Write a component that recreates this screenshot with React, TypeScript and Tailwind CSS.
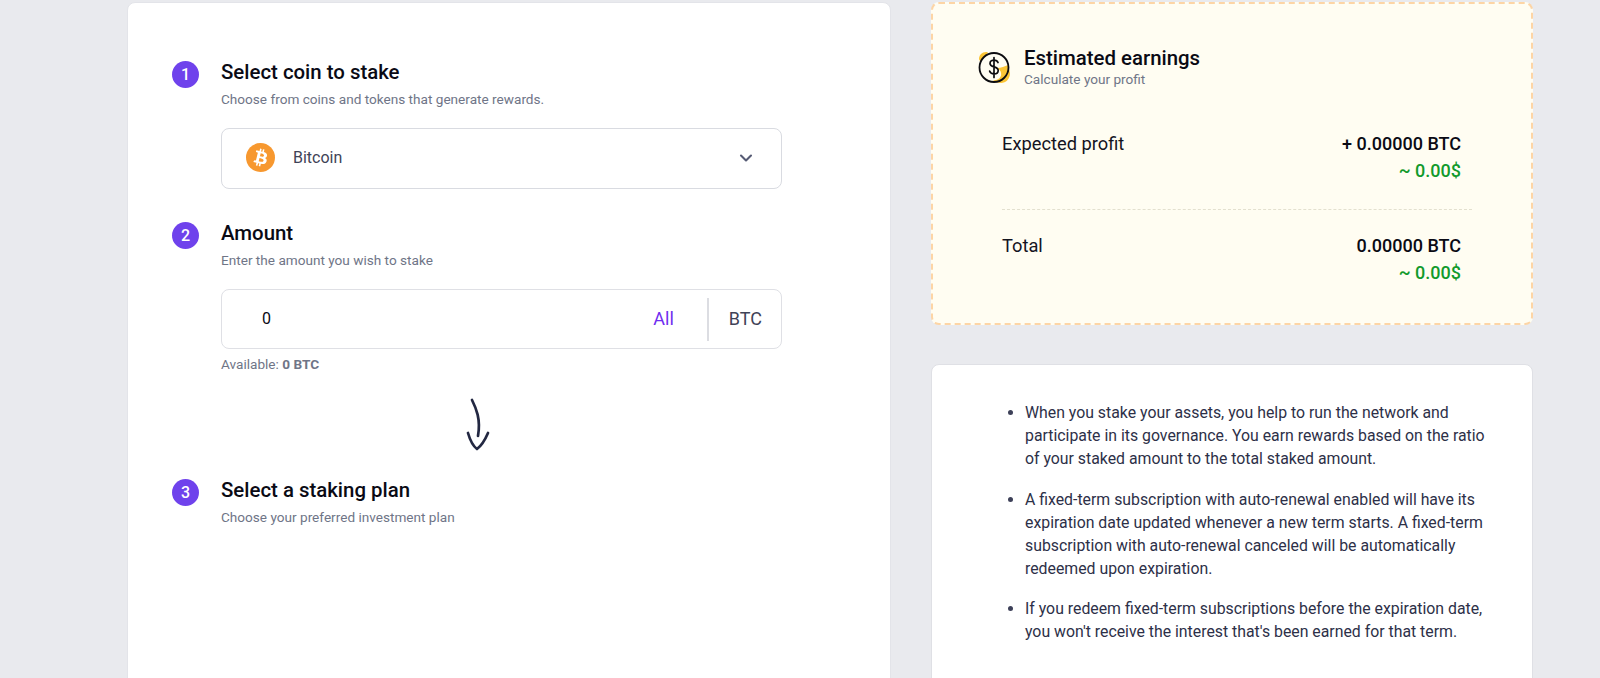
import { ChevronDown } from "lucide-react";

const font = { fontFamily: "Roboto, sans-serif" };

const notes = [
  "When you stake your assets, you help to run the network and participate in its governance. You earn rewards based on the ratio of your staked amount to the total staked amount.",
  "A fixed-term subscription with auto-renewal enabled will have its expiration date updated whenever a new term starts. A fixed-term subscription with auto-renewal canceled will be automatically redeemed upon expiration.",
  "If you redeem fixed-term subscriptions before the expiration date, you won't receive the interest that's been earned for that term.",
];

function StepHeader({ n, title, sub }: { n: number; title: string; sub: string }) {
  return (
    <div className="flex items-start">
      <div className="mt-[1px] flex h-[27px] w-[27px] shrink-0 items-center justify-center rounded-full bg-[#6f42ec] text-[16px] font-medium text-white">
        {n}
      </div>
      <div className="ml-[22px]">
        <h2 className="text-[20.4px] leading-[24px] font-medium text-[#0a0a14]">{title}</h2>
        <p className="mt-[6px] text-[13.6px] leading-[18px] text-[#6f7587]">{sub}</p>
      </div>
    </div>
  );
}

function BitcoinIcon() {
  return (
    <svg width="29" height="29" viewBox="0 0 32 32">
      <circle cx="16" cy="16" r="16" fill="#f7982f" />
      <path
        fill="#fff"
        d="M23.2 14c.3-2.1-1.3-3.2-3.5-4l.7-2.8-1.7-.4-.7 2.8-1.4-.3.7-2.8-1.7-.4-.7 2.8-1.1-.3-2.4-.6-.5 1.8s1.3.3 1.3.3c.7.2.8.6.8 1l-.8 3.2-1.1 4.5c-.1.2-.3.5-.8.4 0 0-1.3-.3-1.3-.3l-.9 2 2.3.6 1.2.3-.7 2.9 1.7.4.7-2.8 1.4.4-.7 2.8 1.7.4.7-2.9c3 .6 5.2.3 6.1-2.3.8-2.1 0-3.3-1.6-4.1 1.1-.3 2-1 2.2-2.6zm-3.9 5.5c-.5 2.1-4.1 1-5.3.7l.9-3.7c1.2.3 4.9.9 4.4 3zm.5-5.5c-.5 1.9-3.5.9-4.4.7l.8-3.4c1 .3 4.100.7 3.600 2.700z"
      />
    </svg>
  );
}

function DollarIcon() {
  return (
    <svg width="33" height="33" viewBox="0 0 33 33" fill="none">
      <path d="M1 8c0-4 3-7 7-7 1 0 2 .5 2 1L3 10c-1 0-2-1-2-2z" fill="#fbc536" />
      <path d="M19 17c4 0 8-2 11-3l2 8c0 6-4 10-9 10-3 0-6-1-8-3 5 1 9-3 8-7 0-2-2-4-4-5z" fill="#fbc536" />
      <circle cx="16" cy="16.500" r="14.500" stroke="#0c0c10" strokeWidth="1.800" />
      <path
        d="M20 11.500c-.6-1.700-2.100-2.400-4-2.400-2.200 0-4 1.100-4 3.300 0 4.400 8.200 2.500 8.200 7 0 2.200-1.900 3.400-4.200 3.400-2.100 0-3.800-.9-4.400-2.800M16 6.500v20"
        stroke="#0c0c10"
        strokeWidth="1.700"
        strokeLinecap="round"
      />
    </svg>
  );
}

function ArrowDoodle() {
  return (
    <svg width="24" height="54" viewBox="0 0 24 54" fill="none">
      <path
        d="M6 2C10 10 15 21 12 38M2 35C4 42 7 48 11 51C15 48 19 42 22 35"
        stroke="#232842"
        strokeWidth="2.700"
        strokeLinecap="round"
        strokeLinejoin="round"
      />
    </svg>
  );
}

function EarningRow({ label, value }: { label: string; value: string }) {
  return (
    <div className="flex items-start justify-between pr-[11px]">
      <span className="text-[18.3px] leading-[27px] text-[#14141f]">{label}</span>
      <div className="text-right">
        <div className="text-[18px] leading-[27px] font-medium text-[#0a0a14]">{value}</div>
        <div className="text-[18px] leading-[27px] font-medium text-[#129a2c]">~ 0.00$</div>
      </div>
    </div>
  );
}

export default function App() {
  return (
    <div style={font} className="h-[678px] overflow-hidden bg-[#e9eaee]">
      <div className="ml-[127px] flex w-[1406px] items-start gap-[40px]">
        {/* Left card */}
        <div className="mt-[2px] h-[800px] w-[764px] shrink-0 rounded-lg border border-[#e3e4e9] bg-white pt-[57px] pl-[44px]">
          <div className="w-[610px]">
            <StepHeader n={1} title="Select coin to stake" sub="Choose from coins and tokens that generate rewards." />
            <div className="mt-[20px] ml-[49px] flex h-[61px] items-center rounded-lg border border-[#d9dbe1] pr-[25px] pb-[2px] pl-[24px]">
              <BitcoinIcon />
              <span className="ml-[18px] text-[16px] text-[#3f4357]">Bitcoin</span>
              <ChevronDown className="ml-auto h-[20px] w-[20px] text-[#565b74]" strokeWidth={2.5} />
            </div>

            <div className="mt-[32px]">
              <StepHeader n={2} title="Amount" sub="Enter the amount you wish to stake" />
            </div>
            <div className="mt-[20px] ml-[49px] flex h-[60px] items-center rounded-lg border border-[#dfe0e5]">
              <span className="ml-[40px] text-[16px] text-[#0a0a14]">0</span>
              <span className="ml-auto pb-[2px] text-[18px] text-[#6f2df0]">All</span>
              <div className="mr-[20px] ml-[33px] h-[43px] w-[2px] bg-[#dcdde2]" />
              <span className="mr-[19px] pb-[2px] text-[18px] text-[#3f4357]">BTC</span>
            </div>
            <p className="mt-[6px] ml-[49px] text-[13.6px] leading-[18px] text-[#6f7587]">
              Available: <span className="font-bold">0 BTC</span>
            </p>

            <div className="mt-[25px] ml-[294px]">
              <ArrowDoodle />
            </div>

            <div className="mt-[26px]">
              <StepHeader n={3} title="Select a staking plan" sub="Choose your preferred investment plan" />
            </div>
          </div>
        </div>

        {/* Right column */}
        <div className="flex w-[602px] shrink-0 flex-col gap-[39px]">
          <div className="mt-[2px] h-[323px] rounded-lg border-2 border-dashed border-[#fdd5a5] bg-[#fffdf2] pt-[42px] pr-[59px] pl-[45px]">
            <div className="flex items-start">
              <div className="mt-[5px] shrink-0">
                <DollarIcon />
              </div>
              <div className="ml-[13px]">
                <h3 className="text-[20.4px] leading-[24px] font-medium text-[#0a0a14]">Estimated earnings</h3>
                <p className="mt-[1px] text-[13.6px] leading-[16px] text-[#6f7587]">Calculate your profit</p>
              </div>
            </div>
            <div className="mt-[43px] ml-[24px]">
              <EarningRow label="Expected profit" value="+ 0.00000 BTC" />
              <div className="mt-[25px] mb-[22px] border-t border-dashed border-[#e3e0cf]" />
              <EarningRow label="Total" value="0.00000 BTC" />
            </div>
          </div>

          <div className="h-[400px] rounded-lg border border-[#dfe0e5] bg-white pt-[36px] pr-[46px] pl-[75px]">
            <ul className="list-disc pl-[18px] text-[15.84px] leading-[23px] text-[#2d3048] marker:text-[#3d4058]">
              {notes.map((note) => (
                <li key={note} className="mb-[17.5px]">
                  {note}
                </li>
              ))}
            </ul>
          </div>
        </div>
      </div>
    </div>
  );
}
